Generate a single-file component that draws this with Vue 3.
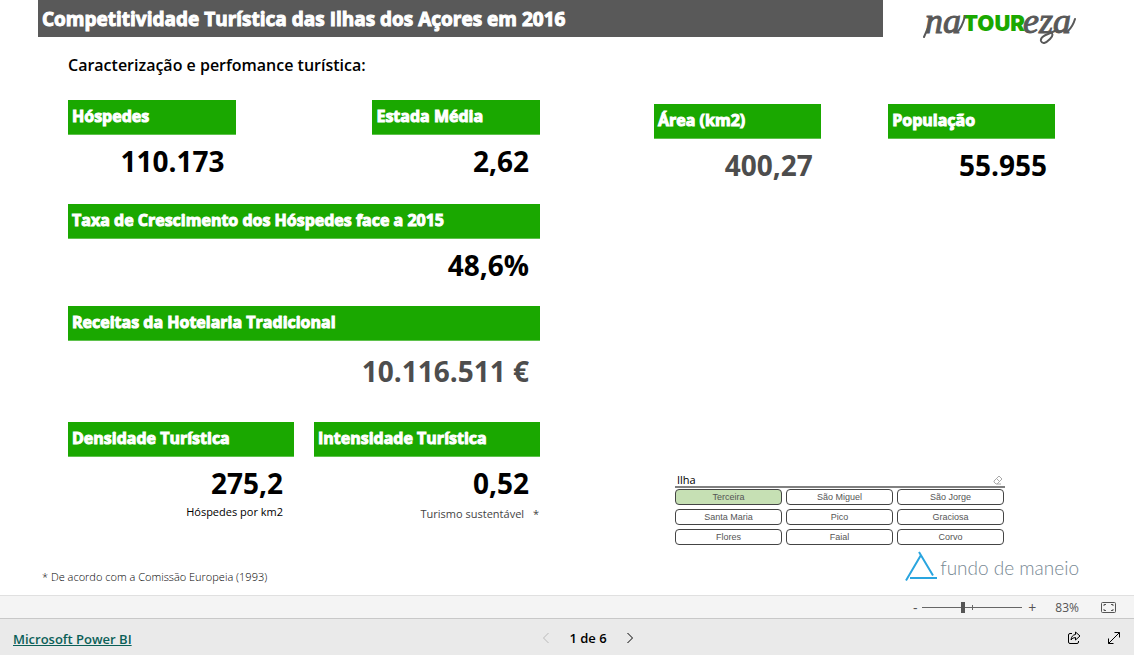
<script setup>
import { ref } from 'vue'

const stayCards = [
  { title: 'Hóspedes', value: '110.173' },
  { title: 'Estada Média', value: '2,62' },
]
const islandCards = [
  { title: 'Área (km2)', value: '400,27', muted: true },
  { title: 'População', value: '55.955' },
]
const islands = ['Terceira', 'São Miguel', 'São Jorge', 'Santa Maria', 'Pico', 'Graciosa', 'Flores', 'Faial', 'Corvo']
const selected = ref('Terceira')
const zoomPosition = ref(40)
</script>

<template>
  <div class="report">
    <header class="top">
      <h1 class="title">Competitividade Turística das Ilhas dos Açores em 2016</h1>
      <div class="brand">
        <svg class="brand-logo" width="164" height="48" viewBox="0 0 164 48" role="img" aria-label="natoureza">
          <g class="script">
            <text x="6" y="33">na</text>
            <text x="104" y="33">eza</text>
          </g>
          <text class="tour" x="44" y="31">TOUR</text>
          <path class="swash" d="M5 37 Q9 28 13 18 M38 32 Q43 28 46 16 M149 31 Q154 26 156 19 M131 32 Q136 34 131 39 Q124 46 122 41 Q121 37 129 34 L138 30" />
        </svg>
      </div>
    </header>

    <main class="board">
      <section class="left">
        <h2 class="subtitle">Caracterização e perfomance turística:</h2>
        <div class="split first">
          <article v-for="c in stayCards" :key="c.title" class="small">
            <h3 class="label">{{ c.title }}</h3>
            <p class="value">{{ c.value }}</p>
          </article>
        </div>
        <article class="growth">
          <h3 class="label">Taxa de Crescimento dos Hóspedes face a 2015</h3>
          <p class="value">48,6%</p>
        </article>
        <article class="revenue">
          <h3 class="label">Receitas da Hotelaria Tradicional</h3>
          <p class="value muted">10.116.511 €</p>
        </article>
        <div class="halves">
          <article>
            <h3 class="label">Densidade Turística</h3>
            <p class="value">275,2</p>
            <p class="unit">Hóspedes por km2</p>
          </article>
          <article>
            <h3 class="label">Intensidade Turística</h3>
            <p class="value">0,52</p>
            <p class="unit sustainable">Turismo sustentável <span class="star">*</span></p>
          </article>
        </div>
      </section>

      <section class="right">
        <div class="split">
          <article v-for="c in islandCards" :key="c.title" class="place">
            <h3 class="label">{{ c.title }}</h3>
            <p class="value" :class="{ muted: c.muted }">{{ c.value }}</p>
          </article>
        </div>
        <div class="slicer">
          <div class="slicer-head">
            <span id="slicer-title">Ilha</span>
            <button class="bare" aria-label="Limpar seleções">
              <svg width="10" height="10" viewBox="0 0 10 10"><path d="M1 6 6 1 9 4 4 9H3L1 7ZM3.500 3.500 6.500 6.500M4 9H8" /></svg>
            </button>
          </div>
          <div class="options" role="group" aria-labelledby="slicer-title">
            <button
              v-for="name in islands" :key="name" class="option"
              :class="{ active: name === selected }" :aria-pressed="name === selected"
              @click="selected = name"
            >{{ name }}</button>
          </div>
        </div>
        <div class="partner">
          <svg width="34" height="32" viewBox="0 0 34 32" aria-hidden="true">
            <path d="M1 29.500 16 4M14 1 28 24.500M5 27H32" />
          </svg>
          <span>fundo de maneio</span>
        </div>
      </section>
      <p class="footnote">* De acordo com a Comissão Europeia (1993)</p>
    </main>

    <div class="zoombar">
      <button class="bare sign" aria-label="Reduzir">-</button>
      <input v-model="zoomPosition" class="slider" type="range" min="0" max="100" aria-label="Zoom">
      <button class="bare sign" aria-label="Ampliar">+</button>
      <span class="percent">83%</span>
      <button class="bare" aria-label="Ajustar à página">
        <svg width="15" height="11" viewBox="0 0 15 11">
          <rect x=".5" y=".5" width="14" height="10" rx="1" />
          <path d="M3 4V2.500H5M10 2.500H12V4M12 7V8.500H10M5 8.500H3V7" />
        </svg>
      </button>
    </div>

    <footer class="footer">
      <div><a class="powerbi" href="#">Microsoft Power BI</a></div>
      <nav class="pager">
        <button class="bare prev" aria-label="Página anterior" disabled>
          <svg width="8" height="12" viewBox="0 0 8 12"><path d="M6.500 1 1.500 6 6.500 11" /></svg>
        </button>
        <span>1 de 6</span>
        <button class="bare" aria-label="Página seguinte">
          <svg width="8" height="12" viewBox="0 0 8 12"><path d="M1.500 1 6.500 6 1.500 11" /></svg>
        </button>
      </nav>
      <div class="actions">
        <button class="bare" aria-label="Partilhar">
          <svg width="14" height="14" viewBox="0 0 14 14">
            <path d="M5 2.500H3Q1.500 2.500 1.500 4V11Q1.500 12.500 3 12.500H10Q11.500 12.500 11.500 11V10M8.500 1 13 5 8.500 9V6.500Q5.500 6.500 4 9Q4.500 4 8.500 3.500Z" />
          </svg>
        </button>
        <button class="bare" aria-label="Ecrã inteiro">
          <svg width="14" height="14" viewBox="0 0 14 14"><path d="M1.500 12.500 12.500 1.500M7.500 1.500H12.500V6.500M1.500 7.500V12.500H6.500" /></svg>
        </button>
      </div>
    </footer>
  </div>
</template>

<style>
body { margin: 0; background: #fff; }
</style>

<style scoped>
* { box-sizing: border-box; }
.report {
  display: flex;
  flex-direction: column;
  min-height: 100vh;
  font-family: "Open Sans", "Noto Sans", sans-serif;
  color: #000;
}
h1, h2, h3, p { margin: 0; }
svg { display: block; fill: none; stroke: currentColor; }
.bare { display: flex; padding: 0; border: 0; background: none; color: inherit; font: inherit; cursor: pointer; }

.top { display: grid; grid-template-columns: 38fr 845fr 251fr; grid-template-rows: 37px; }
.title {
  grid-column: 2;
  padding-left: 4px;
  background: #595959;
  color: #fff;
  font-size: 19px;
  font-weight: 700;
  line-height: 38px;
  white-space: nowrap;
  -webkit-text-stroke: 1px #fff;
}
.brand { padding-left: 36px; }
.brand-logo text { stroke: none; }
.brand-logo .script text { fill: #595959; stroke: #595959; font: italic 400 36px "Liberation Serif", serif; }
.tour { fill: #1aa800; font: 900 22px Inter, sans-serif; }
.swash { stroke: #595959; stroke-width: 2; stroke-linecap: round; }

.board {
  flex: 1;
  display: grid;
  grid-template-columns: 68fr 472fr 114fr 401fr 79fr;
}
.left { grid-area: 1 / 2; }
.right { grid-area: 1 / 4; padding-top: 67px; }
.subtitle { height: 63px; font-size: 16px; font-weight: 600; line-height: 56px; white-space: nowrap; }
.split { display: flex; justify-content: space-between; }
.small { width: 35.5%; }
.place { width: 41.6%; }
.first { height: 104px; }
.growth { height: 102px; }
.revenue { height: 116px; }
.halves { display: grid; grid-template-columns: 1fr 1fr; gap: 20px; }
.label {
  height: 35px;
  padding-left: 4px;
  border-bottom: 1px solid #5fc24d;
  background: #1aa800;
  color: #fff;
  font-size: 16px;
  font-weight: 700;
  line-height: 33px;
  white-space: nowrap;
  -webkit-text-stroke: 1px #fff;
}
.value { padding-right: 11px; font-size: 28px; font-weight: 700; line-height: 52px; text-align: right; }
.place .value { padding-right: 8px; }
.revenue .value { line-height: 60px; }
.muted { color: #4d4d4d; }
.unit { padding-right: 11px; font-size: 11px; line-height: 16px; text-align: right; margin-top: -5px; }
.sustainable { padding-right: 1px; color: #444; line-height: 20px; }
.star { margin-left: 6px; }

.slicer { width: 82.3%; margin: 282px 0 0 21px; }
.slicer-head {
  display: flex;
  align-items: center;
  justify-content: space-between;
  height: 15px;
  padding: 0 2px;
  border-bottom: 2px solid #808080;
  font-size: 11px;
}
.slicer-head .bare { color: #aaa; }
.options { display: grid; grid-template-columns: repeat(3, 1fr); gap: 4px; padding: 1px 1px 0 0; }
.option {
  height: 16px;
  padding: 0;
  border: 1px solid #444;
  border-radius: 4px;
  background: #fff;
  color: #555;
  font: 9px "Liberation Sans", Arial, sans-serif;
}
.active { background: #c6e0b4; }
.partner {
  display: flex;
  justify-content: flex-end;
  align-items: center;
  gap: 1px;
  margin: 6px -24px 0 0;
  color: #2aa5df;
}
.partner svg { stroke-width: 2; }
.partner span { color: #778893; font: 300 19px Lato, sans-serif; }
.footnote { grid-area: 1 / 1 / 2 / -1; align-self: end; padding-left: 42px; font-size: 11px; font-weight: 300; line-height: 16px; margin-bottom: 10px; }

.zoombar {
  display: flex;
  justify-content: flex-end;
  align-items: center;
  height: 23px;
  padding-right: 18px;
  border-top: 1px solid #e0e0e0;
  background: #f4f4f4;
  color: #555;
  font-size: 12px;
}
.sign { width: 10px; justify-content: center; font-size: 14px; }
.slider {
  appearance: none;
  width: 100px;
  height: 11px;
  margin: 0 5px 0 2px;
  background:
    linear-gradient(#666, #666) 50% 50% / 1px 5px no-repeat,
    linear-gradient(#666, #666) 50% 50% / 100% 1px no-repeat;
}
.slider::-webkit-slider-thumb { appearance: none; width: 4px; height: 11px; background: #555; }
.percent { margin: 0 22px 0 18px; }

.footer {
  display: grid;
  grid-template-columns: 1fr auto 1fr;
  align-items: center;
  height: 37px;
  padding: 2px 13px 0;
  border-top: 1px solid #c8c8c8;
  background: #eaeaea;
}
.powerbi { color: #0b6058; font-size: 13px; font-weight: 600; }
.pager { display: flex; align-items: center; gap: 19px; padding-left: 42px; font-size: 13px; font-weight: 600; }
.prev { color: #bbb; }
.actions { display: flex; justify-content: flex-end; gap: 26px; }
</style>
